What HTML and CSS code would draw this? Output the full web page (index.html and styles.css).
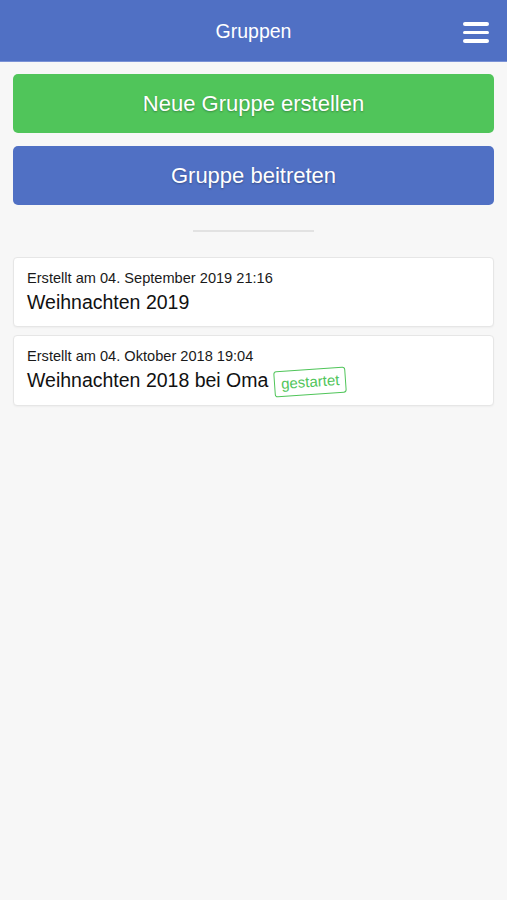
FILE: index.html
```html
<!doctype html>
<html lang="de">
<head>
    <meta charset="UTF-8">
    <title>Gruppen</title>
    <link rel="stylesheet" href="styles.css">
</head>
<body>
    <div id="header">
        <span class="title">Gruppen</span>
        <span id="menu">
            <i></i><i></i><i></i>
        </span>
    </div>
    <div id="main">
        <a class="btn btn-green" href="#">Neue Gruppe erstellen</a>
        <a class="btn btn-blue" href="#">Gruppe beitreten</a>
        <hr class="divider">
        <ul id="list">
            <li class="card">
                <p class="meta">Erstellt am 04. September 2019 21:16</p>
                <p class="name">Weihnachten 2019</p>
            </li>
            <li class="card">
                <p class="meta">Erstellt am 04. Oktober 2018 19:04</p>
                <p class="name">Weihnachten 2018 bei Oma <span class="badge">gestartet</span></p>
            </li>
        </ul>
    </div>
</body>
</html>
```

FILE: styles.css
```css
*{
    margin: 0;
    padding: 0;
}
ul,ol{
    list-style: none;
}
a{
    text-decoration: none;
}
/***样式重置***/
body{
    background: #f7f7f7;
    font-family: "Liberation Sans", Arial, sans-serif;
    color: #111;
}
#header{
    height: 61px;
    background: #5070c4;
    border-bottom: 1px solid #7a92d6;
    display: flex;
    align-items: center;
    justify-content: center;
    position: relative;
}
#header .title{
    color: #fff;
    font-size: 19.5px;
    margin-top: 2px;
}
#menu{
    position: absolute;
    right: 18px;
    top: 22px;
    width: 26px;
    display: flex;
    flex-direction: column;
    gap: 5px;
}
#menu i{
    display: block;
    height: 3.5px;
    background: #fff;
    border-radius: 2px;
}
#main{
    padding: 12px 13px;
}
.btn{
    display: flex;
    align-items: center;
    justify-content: center;
    height: 59px;
    border-radius: 5px;
    color: #fff;
    font-size: 22px;
    text-shadow: 0 1px 2px rgba(0,0,0,0.3);
    margin-bottom: 13px;
}
.btn-green{
    background: #50c55a;
}
.btn-blue{
    background: #5070c4;
}
.divider{
    width: 121px;
    margin: 25px auto 25px;
    border: 0;
    border-top: 2px solid #e2e2e2;
}
.card{
    background: #fff;
    border: 1px solid #e6e6e6;
    border-radius: 4px;
    box-shadow: 0 1px 2px rgba(0,0,0,0.04);
    padding: 10px 13px 10px;
    margin-bottom: 8px;
}
.meta{
    font-size: 14.6px;
    line-height: 20px;
    color: #1a1a1a;
}
.name{
    font-size: 19.5px;
    line-height: 28px;
}
.badge{
    display: inline-block;
    font-size: 15px;
    line-height: 20px;
    color: #50c55a;
    border: 1px solid #50c55a;
    border-radius: 3px;
    padding: 2px 6px;
    transform: rotate(-4deg);
    vertical-align: 0;
}
```
